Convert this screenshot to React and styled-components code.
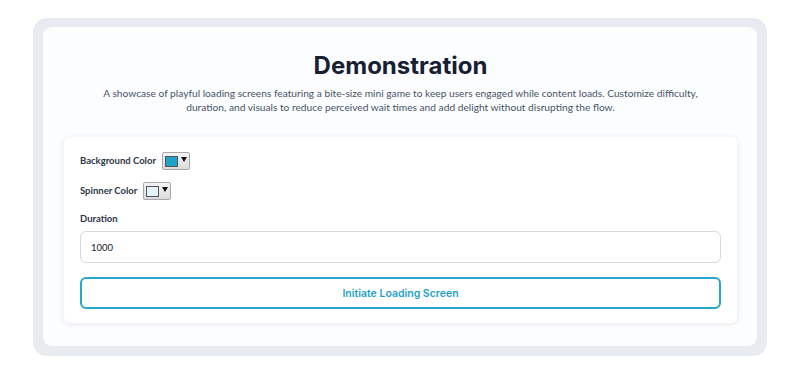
import React, { useState } from "react";
import styled, { createGlobalStyle } from "styled-components";

const GlobalStyle = createGlobalStyle`
    body {
        margin: 0;
        background: #ffffff;
        font-family: "Lato", "Open Sans", sans-serif;
    }
`;

const StyledFrame = styled.div`
    box-sizing: border-box;
    width: 734px;
    margin: 18px 0 0 33px;
    padding: 9px 10px 10px 10px;
    background-color: #e8ecf0;
    border-radius: 14px;
`;

const StyledPanel = styled.div`
    background-color: #fcfdfe;
    border-radius: 9px;
    padding: 24px 20px 23px 21px;
`;

const StyledTitle = styled.h1`
    margin: 0;
    text-align: center;
    font-family: "Inter", sans-serif;
    font-size: 24px;
    font-weight: 700;
    line-height: 30px;
    color: #172033;
`;

const StyledDescription = styled.p`
    margin: 5px auto 0;
    max-width: 620px;
    text-align: center;
    font-size: 10.2px;
    line-height: 14px;
    color: #475467;
`;

const StyledCard = styled.div`
    margin-top: 23px;
    background: #ffffff;
    border-radius: 6px;
    box-shadow: 0 1px 6px rgba(30, 40, 70, 0.1);
    padding: 15px 16px 14px 16px;
`;

const StyledColorRow = styled.div`
    display: flex;
    align-items: center;
    gap: 6px;
    height: 18px;
    margin-bottom: 12px;
`;

const StyledLabel = styled.label`
    display: block;
    font-size: 9.5px;
    font-weight: 700;
    line-height: 12px;
    color: #2d3748;
`;

const StyledSwatchButton = styled.div`
    box-sizing: border-box;
    display: flex;
    align-items: center;
    gap: 3px;
    width: 28px;
    height: 18px;
    padding: 0 2px;
    border: 1px solid #a8a8a8;
    border-radius: 2px;
    background: linear-gradient(#f4f4f4, #dcdcdc);
`;

const StyledSwatch = styled.span`
    box-sizing: border-box;
    width: 14px;
    height: 11px;
    border: 1px solid #555;
    background: ${(props) => props.color};
`;

const StyledArrow = styled.span`
    width: 0;
    height: 0;
    margin-top: -4px;
    border-left: 3px solid transparent;
    border-right: 3px solid transparent;
    border-top: 5px solid #111;
`;

const StyledField = styled.div`
    margin-top: 13px;
`;

const StyledInput = styled.input`
    box-sizing: border-box;
    display: block;
    width: 100%;
    height: 32px;
    margin-top: 6px;
    padding: 0 10px;
    border: 1px solid #d6d9de;
    border-radius: 6px;
    font-family: "Lato", sans-serif;
    font-size: 9.5px;
    color: #1a202c;
    background: #ffffff;
    outline: none;
`;

const StyledButton = styled.button`
    box-sizing: border-box;
    display: block;
    width: 100%;
    height: 32px;
    margin-top: 14px;
    border: 2px solid #25a7cd;
    border-radius: 6px;
    background: #ffffff;
    font-family: "Inter", sans-serif;
    font-size: 10.5px;
    font-weight: 600;
    color: #1f9fc8;
    cursor: pointer;
`;

const ColorPicker = ({ color }) => (
    <StyledSwatchButton>
        <StyledSwatch color={color} />
        <StyledArrow />
    </StyledSwatchButton>
);

const App = () => {
    const [duration, setDuration] = useState("1000");

    return (
        <>
            <GlobalStyle />
            <StyledFrame>
                <StyledPanel>
                    <StyledTitle>Demonstration</StyledTitle>
                    <StyledDescription>
                        A showcase of playful loading screens featuring a
                        bite-size mini game to keep users engaged while content
                        loads. Customize difficulty, duration, and visuals to
                        reduce perceived wait times and add delight without
                        disrupting the flow.
                    </StyledDescription>
                    <StyledCard>
                        <StyledColorRow>
                            <StyledLabel>Background Color</StyledLabel>
                            <ColorPicker color="#1ca3cc" />
                        </StyledColorRow>
                        <StyledColorRow>
                            <StyledLabel>Spinner Color</StyledLabel>
                            <ColorPicker color="#e3f2fb" />
                        </StyledColorRow>
                        <StyledField>
                            <StyledLabel>Duration</StyledLabel>
                            <StyledInput
                                value={duration}
                                onChange={(e) => setDuration(e.target.value)}
                            />
                        </StyledField>
                        <StyledButton>Initiate Loading Screen</StyledButton>
                    </StyledCard>
                </StyledPanel>
            </StyledFrame>
        </>
    );
};

export default App;
